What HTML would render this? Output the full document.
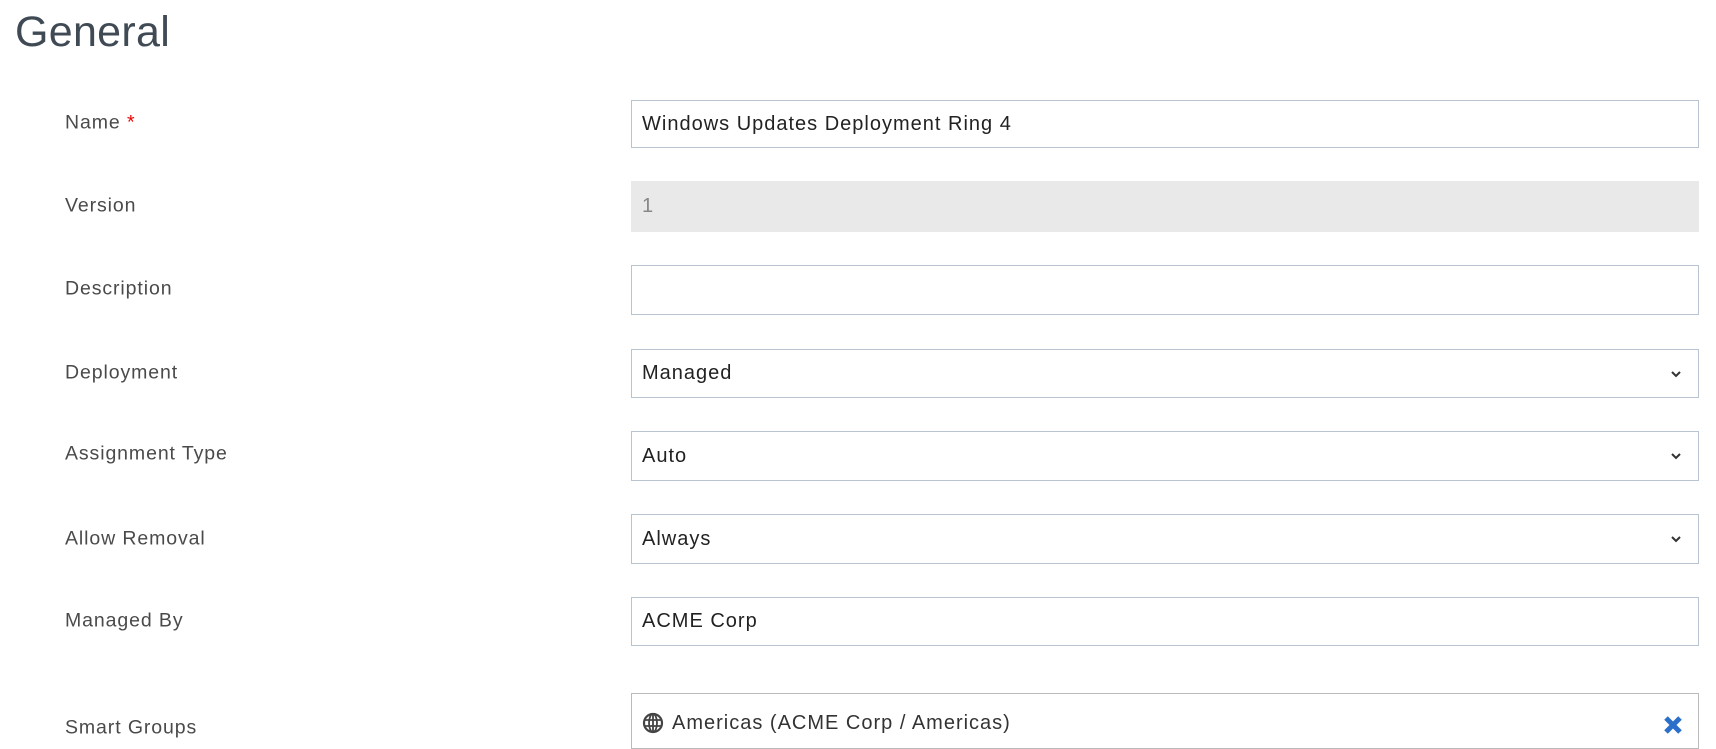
<!DOCTYPE html>
<html><head><style>
body{margin:0;width:1716px;height:747px;overflow:hidden;background:#fff;font-family:"Liberation Sans",sans-serif;position:relative}
h1{position:absolute;left:15px;top:8px;margin:0;font-weight:normal;font-size:43px;color:#3f4a55;letter-spacing:0.3px}
.l{position:absolute;left:65px;font-size:19.5px;letter-spacing:0.9px;color:#4a4a4a;transform:translateY(-50%)}
.b{position:absolute;left:631px;width:1068px;border:1px solid #b8c4d0;background:#fff;box-sizing:border-box;font-size:20px;letter-spacing:1px;color:#222;display:flex;align-items:center;padding-left:10px}
.dis{background:#e9e9e9;border-color:#e9e9e9;color:#888}
.chev{position:absolute;right:16px;top:50%;transform:translateY(-50%)}
</style></head><body>
<h1>General</h1>
<div class="l" style="top:123px">Name <span style="color:#e00">*</span></div>
<div class="l" style="top:206px">Version</div>
<div class="l" style="top:289px">Description</div>
<div class="l" style="top:373px">Deployment</div>
<div class="l" style="top:454px">Assignment Type</div>
<div class="l" style="top:539px">Allow Removal</div>
<div class="l" style="top:621px">Managed By</div>
<div class="l" style="top:728px">Smart Groups</div>

<div class="b" style="top:100px;height:48px">Windows Updates Deployment Ring 4</div>
<div class="b dis" style="top:181px;height:51px">1</div>
<div class="b" style="top:265px;height:50px"></div>
<div class="b" style="top:349px;height:49px">Managed<svg class="chev" width="12" height="8" viewBox="0 0 12 8"><path d="M2 2l4 4 4-4" stroke="#333" stroke-width="2" fill="none"/></svg></div>
<div class="b" style="top:431px;height:50px">Auto<svg class="chev" width="12" height="8" viewBox="0 0 12 8"><path d="M2 2l4 4 4-4" stroke="#333" stroke-width="2" fill="none"/></svg></div>
<div class="b" style="top:514px;height:50px">Always<svg class="chev" width="12" height="8" viewBox="0 0 12 8"><path d="M2 2l4 4 4-4" stroke="#333" stroke-width="2" fill="none"/></svg></div>
<div class="b" style="top:597px;height:49px">ACME Corp</div>
<div class="b" style="top:693px;height:56px;border-color:#bbb;align-items:flex-start;padding-top:18px;color:#333">
<svg width="22" height="22" viewBox="0 0 22 22" style="margin:0 8px 0 0;margin-top:0px"><circle cx="11" cy="11" r="9" stroke="#444" stroke-width="2.2" fill="none"/><ellipse cx="11" cy="11" rx="4" ry="9" stroke="#444" stroke-width="1.8" fill="none"/><path d="M2 8h18M2 14h18M11 2v18" stroke="#444" stroke-width="1.8"/></svg>Americas (ACME Corp / Americas)
<svg width="22" height="22" viewBox="0 0 22 22" style="position:absolute;right:14px;top:20px"><path d="M4 4L18 18M18 4L4 18" stroke="#2b6fca" stroke-width="5"/></svg>
</div>
</body></html>
